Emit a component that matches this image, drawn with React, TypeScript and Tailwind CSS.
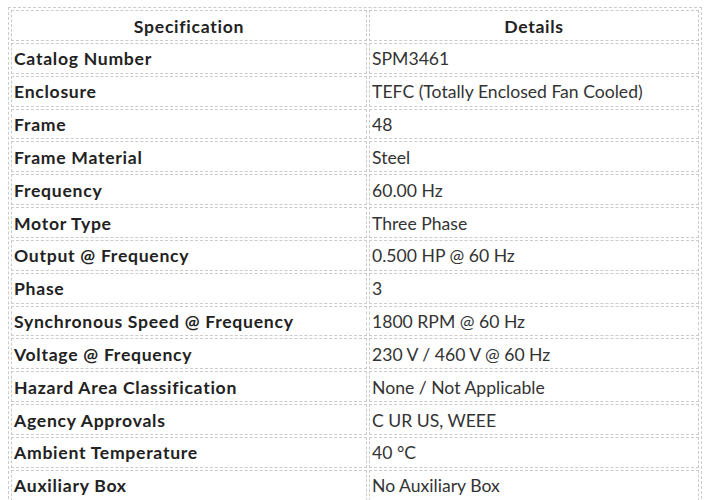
const rows: [string, string][] = [
  ['Catalog Number', 'SPM3461'],
  ['Enclosure', 'TEFC (Totally Enclosed Fan Cooled)'],
  ['Frame', '48'],
  ['Frame Material', 'Steel'],
  ['Frequency', '60.00 Hz'],
  ['Motor Type', 'Three Phase'],
  ['Output @ Frequency', '0.500 HP @ 60 Hz'],
  ['Phase', '3'],
  ['Synchronous Speed @ Frequency', '1800 RPM @ 60 Hz'],
  ['Voltage @ Frequency', '230 V / 460 V @ 60 Hz'],
  ['Hazard Area Classification', 'None / Not Applicable'],
  ['Agency Approvals', 'C UR US, WEEE'],
  ['Ambient Temperature', '40 °C'],
  ['Auxiliary Box', 'No Auxiliary Box'],
]

const cell = 'border border-dashed border-[#cbcbcb] px-[2px] pt-[5.5px] pb-[2.5px] leading-[20.85px]'
const head = 'font-bold tracking-[0.72px] text-[#222]'

export default function App() {
  return (
    <div className="min-h-[500px] bg-white pt-[7px] pl-[8px] font-['Lato',sans-serif] text-[17.6px] text-[#333]">
      <table className="w-[694px] border-separate border-spacing-[2px] border border-dashed border-[#cbcbcb]">
        <thead>
          <tr>
            <th className={`${cell} ${head} w-[356px] text-center`}>Specification</th>
            <th className={`${cell} ${head} text-center`}>Details</th>
          </tr>
        </thead>
        <tbody>
          {rows.map(([label, value]) => (
            <tr key={label}>
              <td className={`${cell} ${head}`}>{label}</td>
              <td className={cell}>{value}</td>
            </tr>
          ))}
        </tbody>
      </table>
    </div>
  )
}
